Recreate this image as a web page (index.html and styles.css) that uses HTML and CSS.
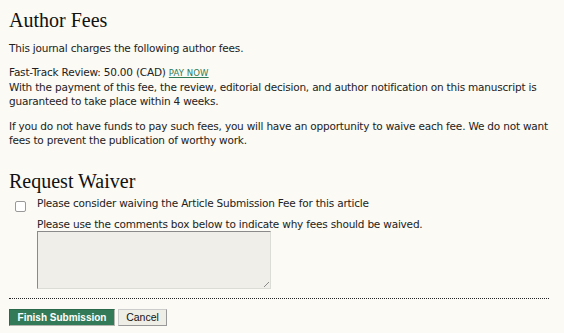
FILE: index.html
```html
<!DOCTYPE html>
<html>
<head>
<meta charset="utf-8">
<link rel="stylesheet" href="styles.css">
</head>
<body>
<div class="page">
  <h2 class="title">Author Fees</h2>
  <p class="para first">This journal charges the following author fees.</p>
  <p class="para">Fast-Track Review: 50.00 (CAD) <a class="paynow" href="#">PAY NOW</a><br>
  With the payment of this fee, the review, editorial decision, and author notification on this manuscript is guaranteed to take place within 4 weeks.</p>
  <p class="para third">If you do not have funds to pay such fees, you will have an opportunity to waive each fee. We do not want fees to prevent the publication of worthy work.</p>

  <h2 class="title waiver">Request Waiver</h2>
  <div class="waiver-row">
    <span class="check"></span>
    <div class="waiver-body">
      <div class="line">Please consider waiving the Article Submission Fee for this article</div>
      <div class="line second">Please use the comments box below to indicate why fees should be waived.</div>
      <div class="textarea"><span class="grip"></span></div>
    </div>
  </div>
  <div class="sep"></div>
  <div class="buttons">
    <button class="btn primary">Finish Submission</button>
    <button class="btn cancel">Cancel</button>
  </div>
</div>
</body>
</html>
```

FILE: styles.css
```css
html, body {
  margin: 0;
  padding: 0;
  background: #fbfaf4;
}
body {
  font-family: "DejaVu Sans", Verdana, sans-serif;
  font-size: 10.5px;
  letter-spacing: -0.2px;
  color: #222;
}
.page {
  padding: 0 10px 0 9px;
  width: 540px;
}
.title {
  font-family: "Liberation Serif", Georgia, serif;
  font-weight: normal;
  font-size: 20px;
  letter-spacing: 0;
  color: #111;
  margin: 0;
  padding-top: 8px;
  line-height: 24px;
}
.title.waiver {
  padding-top: 22px;
}
.para {
  margin: 10px 0 0 0;
  line-height: 14px;
}
.para.first {
  margin-top: 9px;
}
.para.third {
  margin-top: 11px;
}
.paynow {
  color: #2f7a56;
  font-size: 8.5px;
  letter-spacing: 0.1px;
  text-decoration: underline;
}
.waiver-row {
  display: flex;
  margin-top: 3px;
}
.check {
  width: 9px;
  height: 9px;
  border: 1px solid #999;
  border-radius: 2px;
  background: #fff;
  margin: 5px 0 0 6px;
  flex: none;
}
.waiver-body {
  margin-left: 11px;
}
.line {
  line-height: 14px;
}
.line.second {
  margin-top: 7px;
}
.textarea {
  position: relative;
  margin-top: 0;
  width: 232px;
  height: 56px;
  border: 1px solid #8a8a8a;
  border-right-color: #dcdcd6;
  border-bottom-color: #dcdcd6;
  background: #efeee8;
}
.grip {
  position: absolute;
  right: 1px;
  bottom: 1px;
  width: 10px;
  height: 10px;
  background: repeating-linear-gradient(135deg, transparent 0 2px, #888 2px 3px, transparent 3px 4px);
  clip-path: polygon(100% 0, 100% 100%, 0 100%);
}
.sep {
  margin-top: 9px;
  border-top: 1px dotted #222;
  width: 540px;
}
.buttons {
  display: flex;
  gap: 3px;
  margin-top: 10px;
}
.btn {
  font-family: "Liberation Sans", Arial, sans-serif;
  white-space: nowrap;
  height: 17px;
  padding: 0;
  margin: 0;
  line-height: 15px;
  letter-spacing: 0;
}
.primary {
  font-size: 10px;
  background: #337a58;
  color: #fff;
  font-weight: bold;
  border: 1px solid #2a6a4a;
  border-right-color: #b5b5b0;
  border-bottom-color: #b5b5b0;
  width: 106px;
}
.cancel {
  font-size: 10.5px;
  background: #eeede6;
  color: #111;
  border: 1px solid #ccc;
  border-right-color: #999;
  border-bottom-color: #999;
  width: 49px;
}
```
